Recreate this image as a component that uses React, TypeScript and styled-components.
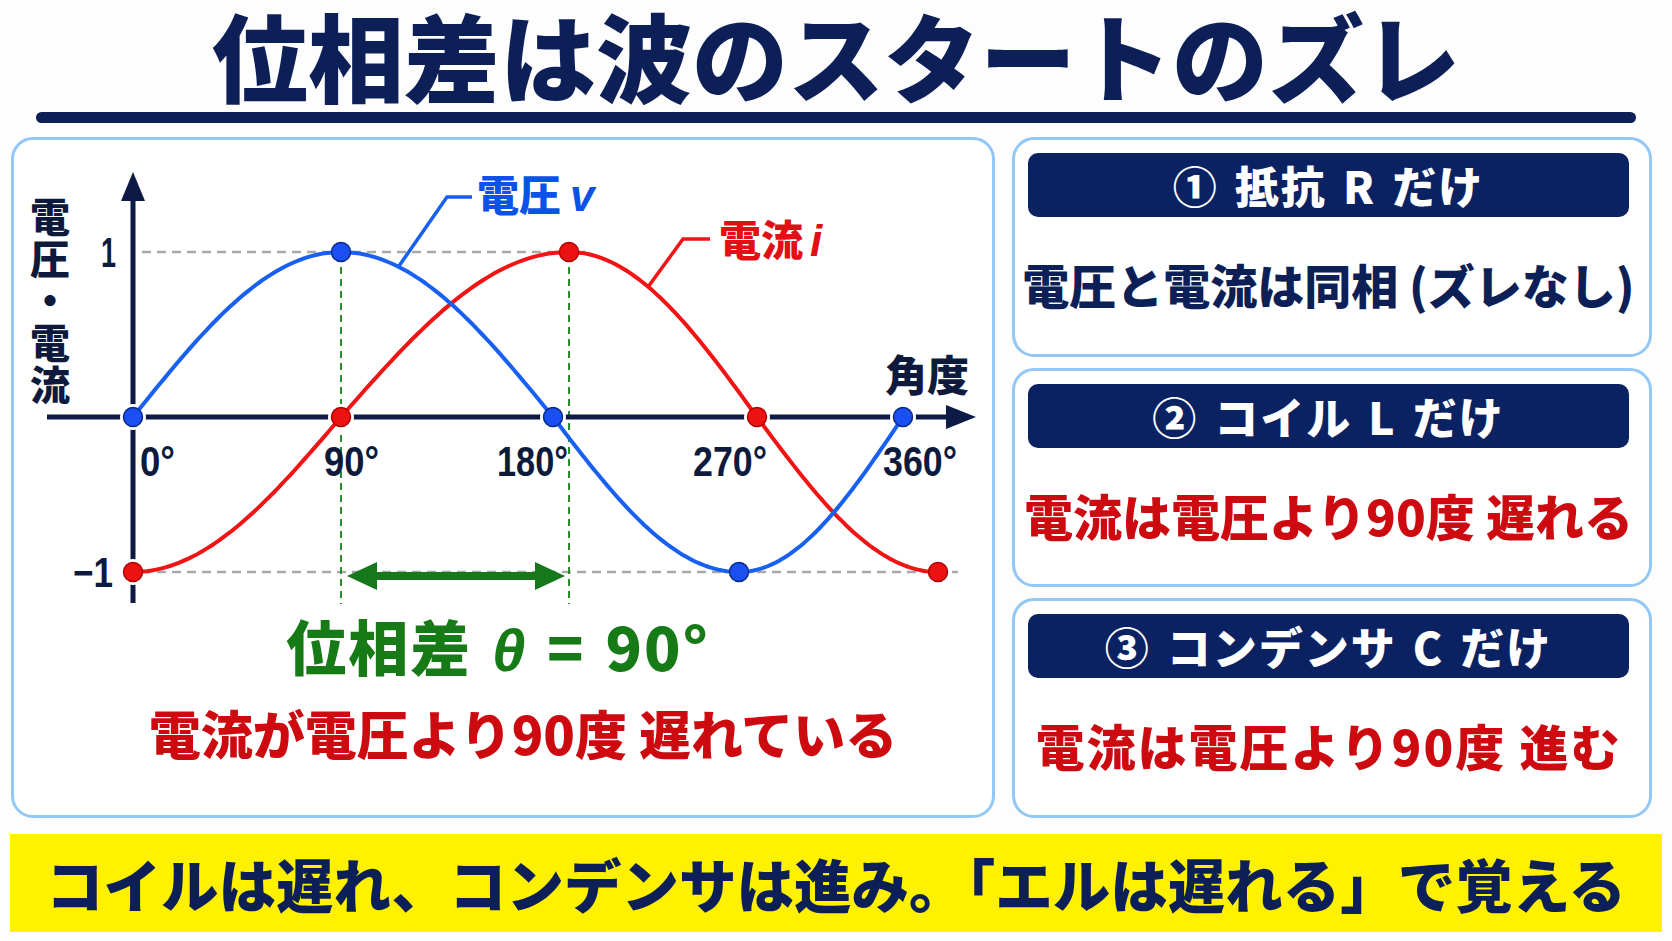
import React from 'react';
import styled, { createGlobalStyle } from 'styled-components';

const NAVY = '#0c1f57';
const BLUE = '#1760f2';
const RED = '#f01414';

const GlobalStyle = createGlobalStyle`
  html, body { margin: 0; padding: 0; background: #ffffff; }
  body { font-family: "Noto Sans CJK JP", "Noto Sans", sans-serif; }
`;

const Page = styled.div`
  width: 1672px;
  height: 941px;
  box-sizing: border-box;
  display: flex;
  flex-direction: column;
  background: #fdfdfd;
  overflow: hidden;
`;

const Title = styled.h1`
  margin: -16px 0 -15px 0;
  height: 139px;
  line-height: 139px;
  text-align: center;
  font-size: 96px;
  font-weight: 900;
  color: ${NAVY};
  letter-spacing: 0;
`;

const Rule = styled.div`
  height: 11px;
  margin: 4px 36px 0 36px;
  border-radius: 6px;
  background: ${NAVY};
`;

const Main = styled.div`
  display: grid;
  grid-template-columns: 984px 640px;
  gap: 17px;
  margin: 14px 0 0 11px;
  height: 681px;
`;

const Panel = styled.div`
  box-sizing: border-box;
  border: 3px solid #93c8f6;
  border-radius: 22px;
  background: #ffffff;
`;

const ChartPanel = styled(Panel)`
  display: flex;
  flex-direction: column;
  align-items: center;
`;

const ChartSvg = styled.svg`
  display: block;
  width: 978px;
  height: 470px;
  flex: none;
`;

const PhaseCaption = styled.div`
  font-size: 60px;
  line-height: 70px;
  font-weight: 900;
  color: #167a16;
  letter-spacing: 2px;
  word-spacing: 4px;
  margin-left: -10px;
  white-space: nowrap;
`;

const Theta = styled.i`
  font-family: "Liberation Sans", sans-serif;
  font-weight: 700;
`;

const LagCaption = styled.div`
  margin-top: 16px;
  font-size: 52px;
  line-height: 62px;
  font-weight: 900;
  color: #cc0a10;
  margin-left: 40px;
  white-space: nowrap;
`;

const Side = styled.div`
  display: flex;
  flex-direction: column;
  gap: 11px;
`;

const CasePanel = styled(Panel)`
  flex: 1;
  display: flex;
  flex-direction: column;
  padding: 13px 20px 0 13px;
`;

const CaseHeader = styled.div`
  height: 64px;
  flex: none;
  border-radius: 10px;
  background: #0a2262;
  color: #ffffff;
  display: flex;
  align-items: center;
  justify-content: center;
  font-size: 44px;
  font-weight: 900;
  letter-spacing: 2px;
  word-spacing: 4px;
`;

const CaseBody = styled.div<{ $tone: 'navy' | 'red'; $wide?: boolean }>`
  flex: 1;
  display: flex;
  align-items: center;
  justify-content: center;
  font-size: ${(p) => (p.$tone === 'navy' ? '47px' : '49px')};
  letter-spacing: ${(p) => (p.$wide ? '2px' : '0')};
  font-weight: 900;
  color: ${(p) => (p.$tone === 'navy' ? NAVY : '#cc0a10')};
  white-space: nowrap;
  padding-bottom: 4px;
`;

const Footer = styled.div`
  margin: 16px 10px 0 10px;
  height: 98px;
  background: #fff100;
  display: flex;
  align-items: center;
  justify-content: center;
  font-size: 57.5px;
  font-weight: 900;
  color: ${NAVY};
  white-space: nowrap;
`;

// angle -> x, piecewise (matches the hand drawn spacing of the picture)
type Knot = [number, number];
const blueKnots: Knot[] = [[0, 133], [90, 341], [180, 553], [270, 739], [360, 903]];
const redKnots: Knot[] = [[0, 133], [90, 341], [180, 569], [270, 757], [360, 938]];

const xAt = (knots: Knot[], deg: number) => {
  for (let i = 0; i < knots.length - 1; i++) {
    const [a0, x0] = knots[i];
    const [a1, x1] = knots[i + 1];
    if (deg <= a1) return x0 + ((deg - a0) / (a1 - a0)) * (x1 - x0);
  }
  return knots[knots.length - 1][1];
};
const yAt = (s: number) => (s >= 0 ? 417 - 165 * s : 417 - 155 * s);

const curve = (knots: Knot[], fn: (r: number) => number) => {
  const pts: string[] = [];
  for (let d = 0; d <= 360; d += 2) {
    const r = (d * Math.PI) / 180;
    pts.push(`${xAt(knots, d).toFixed(1)},${yAt(fn(r)).toFixed(1)}`);
  }
  return pts.join(' ');
};

const bluePts = curve(blueKnots, (r) => Math.sin(r));
const redPts = curve(redKnots, (r) => -Math.cos(r));

const blueDots: Knot[] = [[133, 417], [341, 252], [553, 417], [739, 572], [903, 417]];
const redDots: Knot[] = [[133, 572], [341, 417], [569, 252], [757, 417], [938, 572]];

// label, x, width
const degLabels: [string, number, number][] = [
  ['0°', 140, 35],
  ['90°', 324, 55],
  ['180°', 497, 71],
  ['270°', 693, 74],
  ['360°', 883, 74],
];

const AXIS = '#0c1a45';
const num = { fontFamily: '"Liberation Sans", sans-serif', fontWeight: 700 } as const;
const jp = { fontFamily: '"Noto Sans CJK JP", sans-serif', fontWeight: 900 } as const;

function Chart() {
  return (
    <ChartSvg viewBox="14 140 978 470">
      {/* guides */}
      <g stroke="#a9a9a9" strokeWidth={2.5} strokeDasharray="9 6">
        <line x1={142} y1={252} x2={592} y2={252} />
        <line x1={142} y1={572} x2={958} y2={572} />
      </g>
      <g stroke="#2b8c2b" strokeWidth={2} strokeDasharray="7 5">
        <line x1={341} y1={255} x2={341} y2={604} />
        <line x1={569} y1={255} x2={569} y2={604} />
      </g>

      {/* axes */}
      <line x1={133} y1={603} x2={133} y2={196} stroke={AXIS} strokeWidth={5} />
      <polygon points="133,172 121,201 145,201" fill={AXIS} />
      <line x1={47} y1={417} x2={950} y2={417} stroke={AXIS} strokeWidth={5} />
      <polygon points="976,417 946,405 946,429" fill={AXIS} />

      {/* halos */}
      {[...blueDots, ...redDots].map(([x, y], i) => (
        <circle key={`h${i}`} cx={x} cy={y} r={13} fill="#ffffff" />
      ))}

      {/* curves */}
      <polyline points={redPts} fill="none" stroke={RED} strokeWidth={4} strokeLinejoin="round" />
      <polyline points={bluePts} fill="none" stroke={BLUE} strokeWidth={4} strokeLinejoin="round" />

      {/* leaders */}
      <polyline points="472,197 447,197 399,266" fill="none" stroke={BLUE} strokeWidth={3.5} />
      <polyline points="710,239 683,239 648,287" fill="none" stroke={RED} strokeWidth={3.5} />

      {/* phase arrow */}
      <line x1={372} y1={576} x2={540} y2={576} stroke="#16781a" strokeWidth={8} />
      <polygon points="347,576 377,562 377,590" fill="#16781a" />
      <polygon points="565,576 535,562 535,590" fill="#16781a" />

      {/* dots */}
      {blueDots.map(([x, y], i) => (
        <circle key={`b${i}`} cx={x} cy={y} r={9.5} fill="#1a4ff2" stroke="#0b2a8a" strokeWidth={1.5} />
      ))}
      {redDots.map(([x, y], i) => (
        <circle key={`r${i}`} cx={x} cy={y} r={9.5} fill="#ec1212" stroke="#b30000" strokeWidth={1.5} />
      ))}

      {/* labels */}
      <g fill="#0d1a3c" fontSize={42} style={num}>
        <text x={101} y={267} textLength={15} lengthAdjust="spacingAndGlyphs">1</text>
        <text x={73} y={587} textLength={40} lengthAdjust="spacingAndGlyphs">−1</text>
        {degLabels.map(([t, x, w]) => (
          <text key={t} x={x} y={476} textLength={w} lengthAdjust="spacingAndGlyphs">{t}</text>
        ))}
      </g>
      <text
        x={50}
        y={197}
        fontSize={40}
        fill="#0d1a3c"
        letterSpacing={2}
        style={{ ...jp, writingMode: 'vertical-rl' }}
      >
        電圧・電流
      </text>
      <text x={885} y={391} fontSize={42} fill="#0d1a3c" style={jp}>角度</text>

      <text x={477} y={211} fontSize={42} fill="#0b52e6" style={jp}>電圧</text>
      <text x={570} y={211} fontSize={44} fill="#0b52e6" style={num} fontStyle="italic">v</text>
      <text x={719} y={256} fontSize={42} fill="#e20f14" style={jp}>電流</text>
      <text x={810} y={256} fontSize={44} fill="#e20f14" style={num} fontStyle="italic">i</text>
    </ChartSvg>
  );
}

const cases = [
  { head: '① 抵抗 R だけ', body: '電圧と電流は同相 (ズレなし)', tone: 'navy' as const, wide: false },
  { head: '② コイル L だけ', body: '電流は電圧より90度 遅れる', tone: 'red' as const, wide: false },
  { head: '③ コンデンサ C だけ', body: '電流は電圧より90度 進む', tone: 'red' as const, wide: true },
];

export default function App() {
  return (
    <>
      <GlobalStyle />
      <Page>
        <Title>位相差は波のスタートのズレ</Title>
        <Rule />
        <Main>
          <ChartPanel>
            <Chart />
            <PhaseCaption>
              位相差 <Theta>θ</Theta> = 90°
            </PhaseCaption>
            <LagCaption>電流が電圧より90度 遅れている</LagCaption>
          </ChartPanel>
          <Side>
            {cases.map((c) => (
              <CasePanel key={c.head}>
                <CaseHeader>{c.head}</CaseHeader>
                <CaseBody $tone={c.tone} $wide={c.wide}>{c.body}</CaseBody>
              </CasePanel>
            ))}
          </Side>
        </Main>
        <Footer>コイルは遅れ、コンデンサは進み。「エルは遅れる」で覚える</Footer>
      </Page>
    </>
  );
}
